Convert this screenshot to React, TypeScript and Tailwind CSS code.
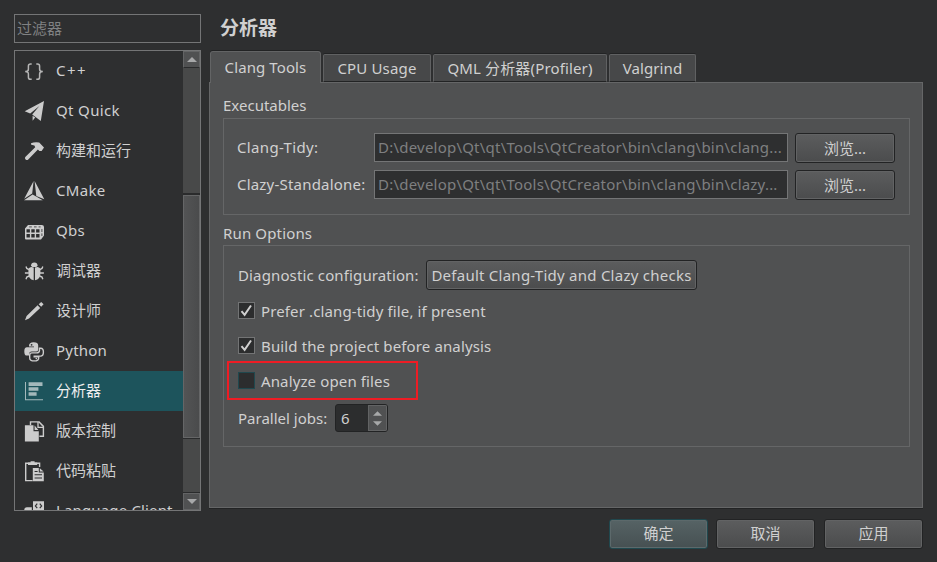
import type { ReactNode } from "react";

const Svg = ({ children }: { children: ReactNode }) => (
  <svg className="block shrink-0 overflow-visible" width="20" height="20" viewBox="0 0 20 20" fill="currentColor">
    {children}
  </svg>
);

const BracesIcon = () => (
  <Svg>
    <path
      d="M7.7 3H6.6Q4.4 3 4.4 5V8.2Q4.4 10.6 1.2 10.6Q4.4 10.6 4.4 13V16.2Q4.4 18.3 6.6 18.3H7.7M12.3 3H13.4Q15.6 3 15.6 5V8.2Q15.6 10.6 18.8 10.6Q15.6 10.6 15.6 13V16.2Q15.6 18.3 13.4 18.3H12.3"
      fill="none"
      stroke="currentColor"
      strokeWidth="1.5"
      opacity=".85"
    />
  </Svg>
);
const PlaneIcon = () => (
  <Svg>
    <path d="M20 0 .7 10.2l5.5 2.4L15.4 5 8.2 13.6l8.6 6.4zM8.6 14.8v5l2.6-3.2z" />
  </Svg>
);
const HammerIcon = () => (
  <Svg>
    <path d="M7 2.2Q10.5.6 15.2 1.4L20 6.5 17.6 10H15.4L13.9 8.4 4 18.8Q2.8 19.5 1.6 18.4T1.3 16L11.2 6.2 10.4 4.6 7.2 3.8z" />
  </Svg>
);
const CMakeIcon = () => (
  <Svg>
    <path d="M9.6 0 8.2 12.6.2 17.8zM10.6 0 20.3 18.2 12.3 14.9zM8.6 13.6 18.8 19.2H0z" />
  </Svg>
);
const QbsIcon = () => (
  <Svg>
    <path
      fillRule="evenodd"
      d="M4 4h13.8Q20 4 20 6v8.4L17 18.4H2Q1 18.4 1 17.4V7.4zM2.5 8.2v3.3h3.4V8.2zM7.3 8.2v3.3h3.4V8.2zM12.1 8.2v3.3h3.4V8.2zM2.5 13v3.6h3.4V13zM7.3 13v3.6h3.4V13zM12.1 13v3.6h3.4V13z"
    />
    <path d="M5.2 5.9h2.6M10 5.9h2.6M14.6 5.9h2M17.9 8v3M17.9 12.4v2.6" stroke="#2e2f30" strokeWidth=".8" />
  </Svg>
);
const BugIcon = () => (
  <Svg>
    <path d="M6.9 4.8Q7.2 1.4 10.3 1.4t3.4 3.4L12.3 6h-4zM9.7 6.4v12.8Q4.4 18 4.4 12.4V9.2Q4.4 6.6 7.2 6.1zM11 6.4v12.8Q16.4 18 16.4 12.4V9.2Q16.4 6.6 13.6 6.1z" />
    <path
      d="M5 8.6 2.8 7.5 2 5.5M4.8 12H.9M5.2 15l-2.4 1-.8 2.2M15.8 8.6 18 7.5l.8-2M16 12h3.9M15.6 15l2.4 1 .8 2.2"
      fill="none"
      stroke="currentColor"
      strokeWidth="1.4"
    />
  </Svg>
);
const PenIcon = () => (
  <Svg>
    <path d="m13.6 4.3 2.6 2.6L5 17.4 1 19.2l1.6-4.1zM17.2.9l2.4 2.3-2.4 2.5-2.5-2.5z" />
  </Svg>
);
const PythonIcon = () => (
  <Svg>
    <path
      transform="translate(0 .6)"
      d="M5 4.2Q5 .7 9.6.7T14.2 4v3.8Q14.2 10 12 10H7.7Q5.1 10 5.1 12.7V14H3Q.3 14 .3 9.8T3 5.6h7V5H5zM7.6 2.3a.9.9 0 1 0 0 1.8.9.9 0 0 0 0-1.8z"
      fillRule="evenodd"
    />
    <path
      transform="translate(0 .8)"
      d="M15.5 6.4h1.3q2.6 0 2.6 3.8T17 14.3h-6.8v.8h4.5v1q0 3-4.5 3t-4.5-3v-3q0-2 2.4-2h4.4q3 0 3-2.7z"
      fill="none"
      stroke="currentColor"
      strokeWidth="1.4"
    />
    <circle cx="12.3" cy="17.6" r=".8" />
  </Svg>
);
const AnalyzerIcon = () => (
  <Svg>
    <path d="M1 1h1v17.2H19v1H1zM4.6 1.3H18.5V5H4.6zM4.6 6.3h9.8V9.8H4.6zM4.6 11.2h8V14.8H4.6z" />
  </Svg>
);
const VersionIcon = () => (
  <Svg>
    <path d="M6.5 4V.9h8.6L19.4 5.4V15.2h-4" fill="none" stroke="currentColor" strokeWidth="1.4" />
    <path d="M14 1v5.4h5.4" fill="none" stroke="currentColor" strokeWidth="1.3" />
    <path d="M.9 4.2h8.6v6H14.8v10.2H.9zM10.6 4.6 14.4 9h-3.8z" />
  </Svg>
);
const PasteIcon = () => (
  <Svg>
    <path d="M8.6 19.6H1.7V2.2H15.6V6" fill="none" stroke="currentColor" strokeWidth="1.4" />
    <path d="M4 1.6h2.6V.2h4v1.4h2.6V4H4z" />
    <path
      fillRule="evenodd"
      d="M8.8 7h6v4.6h5v8.7H8.8zM15.8 7.2l3.8 3.4h-3.8zM10.6 10v1h3v-1zM10.6 13.2v1h7.4v-1zM10.6 16.4v1h7.4v-1z"
    />
  </Svg>
);
const ClientIcon = () => (
  <Svg>
    <path
      fillRule="evenodd"
      d="M9 .2h11V10H17l-3 3v-3H9zM12.8 2.2 10.6 4.9l2.2 2.7.9-.8-1.6-1.9 1.6-1.9zM16.2 2.2l-.9.8 1.6 1.9-1.6 1.9.9.8 2.2-2.7z"
    />
    <path d="M.3 14V8.8Q.3 6.2 3 6.2h4.8V14z" />
  </Svg>
);

const items: { label: string; icon: ReactNode; track?: string; active?: boolean }[] = [
  { label: "C++", icon: <BracesIcon />, track: "tracking-[1.5px]" },
  { label: "Qt Quick", icon: <PlaneIcon />, track: "tracking-[0.35px]" },
  { label: "构建和运行", icon: <HammerIcon /> },
  { label: "CMake", icon: <CMakeIcon />, track: "tracking-[0.3px]" },
  { label: "Qbs", icon: <QbsIcon />, track: "tracking-[0.3px]" },
  { label: "调试器", icon: <BugIcon /> },
  { label: "设计师", icon: <PenIcon /> },
  { label: "Python", icon: <PythonIcon />, track: "tracking-[0.2px]" },
  { label: "分析器", icon: <AnalyzerIcon />, active: true },
  { label: "版本控制", icon: <VersionIcon /> },
  { label: "代码粘贴", icon: <PasteIcon /> },
  { label: "Language Client", icon: <ClientIcon />, track: "tracking-[0.15px]" },
];

const Arrow = ({ down = false, small = false }: { down?: boolean; small?: boolean }) => (
  <svg width={small ? 9 : 10} height="5" viewBox="0 0 10 5" className="block" fill="#a7a8a9">
    <path d={down ? "M0 0h10L5 5z" : "M0 5h10L5 0z"} />
  </svg>
);

const Button = ({ children, className = "" }: { children: ReactNode; className?: string }) => (
  <button
    className={`flex shrink-0 items-center justify-center rounded-[3px] border border-[#222324] bg-linear-to-b from-[#5c5d5e] to-[#4b4c4d] whitespace-nowrap shadow-[inset_0_0_0_1px_#626364] ${className}`}
  >
    {children}
  </button>
);

const PathRow = ({ label, value, track }: { label: string; value: string; track: string }) => (
  <div className="flex h-[30px] items-start">
    <span className={`-ml-px w-[137px] shrink-0 leading-[29px] whitespace-nowrap ${track}`}>{label}</span>
    <div className="h-[29px] w-[414px] shrink-0 overflow-hidden border border-[#747576] bg-[#2e2f30] pl-[3px] leading-[27px] tracking-[0.22px] whitespace-nowrap text-[#7e7f80]">
      {value}
    </div>
    <Button className="ml-[7px] h-[30px] w-[100px]">浏览...</Button>
  </div>
);

const Check = ({ label, checked = false }: { label: string; checked?: boolean }) => (
  <div className="flex h-[35px] items-center gap-[6px]">
    <span
      className={`flex size-[17px] shrink-0 items-center justify-center border bg-[#2c2d2e] ${checked ? "border-[#737475]" : "border-[#20484e]"}`}
    >
      {checked && (
        <svg width="13" height="13" viewBox="0 0 13 13" fill="none">
          <path d="M1.5 7.2 4.6 10.8 11 1.5" stroke="#d0d0d0" strokeWidth="2" />
        </svg>
      )}
    </span>
    <span className="tracking-[0.13px] whitespace-nowrap">{label}</span>
  </div>
);

const tabs = [
  { label: "CPU Usage", width: "w-[108px]", track: "tracking-[0.15px]" },
  { label: "QML 分析器(Profiler)", width: "w-[174px]", track: "tracking-[0.15px]" },
  { label: "Valgrind", width: "w-[87px]", track: "tracking-[0.1px]" },
];

export default function App() {
  return (
    <div className="flex h-[562px] w-[937px] overflow-hidden bg-[#2e2f30] pt-[14px] pl-[14px] font-['Noto_Sans','Noto_Sans_CJK_SC',sans-serif] text-[15px] leading-[20px] text-[#d0d0d0]">
      <aside className="w-[187px] shrink-0">
        <div className="h-[29px] border border-[#747576] pl-[2px] leading-[27px] text-[#808182]">过滤器</div>
        <div className="mt-[7px] flex h-[461px] overflow-hidden border border-[#747576]">
          <ul className="w-[168px] shrink-0">
            {items.map((it) => (
              <li
                key={it.label}
                className={`flex h-[40px] items-center gap-[12px] pl-[9px] whitespace-nowrap ${it.active ? "bg-[#1d545c]" : ""}`}
              >
                <span className={it.active ? "text-[#a3b8bb]" : "text-[#cccccc]"}>{it.icon}</span>
                <span className={`pb-[2px] ${it.track ?? ""} ${it.active ? "text-[#efefef]" : ""}`}>{it.label}</span>
              </li>
            ))}
          </ul>
          <div className="flex w-[17px] flex-col bg-[#484949]">
            <div className="flex h-[17px] items-center justify-center border border-[#636465] border-b-[#2a2b2c] bg-[#505152]">
              <Arrow />
            </div>
            <div className="h-[127px] border-b-2 border-[#2a2b2c]" />
            <div className="h-[243px] border border-[#656667] bg-linear-to-r from-[#535455] to-[#4a4b4c]" />
            <div className="h-[55px] border-y border-[#2a2b2c]" />
            <div className="flex h-[17px] items-center justify-center border border-[#636465] bg-[#505152]">
              <Arrow down />
            </div>
          </div>
        </div>
      </aside>

      <main className="ml-[8px] w-[714px] shrink-0">
        <h1 className="h-[36px] pl-[11px] text-[19px] leading-[29px] font-bold">分析器</h1>
        <div className="flex h-[32px] items-end gap-[2px] pl-px">
          <div className="mb-[-1px] flex h-[32px] w-[111px] items-center justify-center rounded-t-[3px] border border-b-0 border-[#636465] bg-[#505152] pb-[2px] tracking-[0.1px] whitespace-nowrap shadow-[0_-1px_0_#222324]">
            Clang Tools
          </div>
          {tabs.map((t) => (
            <div
              key={t.label}
              className={`flex h-[28px] items-center justify-center rounded-t-[2px] border border-b-[#222324] border-[#606162] bg-[#474849] pb-px whitespace-nowrap shadow-[0_-1px_0_#222324] ${t.width} ${t.track}`}
            >
              {t.label}
            </div>
          ))}
        </div>
        <section className="h-[426px] border border-[#656667] bg-[#505152] pl-[13px] shadow-[0_1px_0_#222324]">
          <div className="pt-[11px] leading-[22px]">Executables</div>
          <div className="mt-[2px] flex h-[97px] w-[687px] flex-col gap-[7px] border border-[#656667] pt-[14px] pl-[14px]">
            <PathRow
              label="Clang-Tidy:"
              value="D:\develop\Qt\qt\Tools\QtCreator\bin\clang\bin\clang..."
              track="tracking-[0.35px]"
            />
            <PathRow
              label="Clazy-Standalone:"
              value="D:\develop\Qt\qt\Tools\QtCreator\bin\clang\bin\clazy..."
              track="tracking-[0.2px]"
            />
          </div>
          <div className="mt-[7px] leading-[22px] tracking-[0.15px]">Run Options</div>
          <div className="mt-px h-[202px] w-[687px] border border-[#656667] pt-[14px] pl-[14px]">
            <div className="flex h-[30px] items-center">
              <span className="w-[188px] shrink-0 tracking-[0.13px] whitespace-nowrap">Diagnostic configuration:</span>
              <Button className="h-[30px] w-[271px] tracking-[0.25px]">Default Clang-Tidy and Clazy checks</Button>
            </div>
            <div className="mt-[3px]">
              <Check label="Prefer .clang-tidy file, if present" checked />
              <Check label="Build the project before analysis" checked />
              <div className="-mt-[2px] -ml-[11px] flex h-[39px] w-[191px] items-center border-2 border-[#ee1c24] pl-[9px]">
                <Check label="Analyze open files" />
              </div>
            </div>
            <div className="mt-[4px] flex h-[28px] items-center">
              <span className="w-[97px] shrink-0 whitespace-nowrap">Parallel jobs:</span>
              <div className="flex h-[28px] w-[53px] overflow-hidden rounded-[3px] border border-[#222324] bg-[#2c2d2e]">
                <span className="w-[32px] pl-[5px] leading-[27px]">6</span>
                <div className="flex flex-1 flex-col items-center justify-center gap-[5px] border border-[#626364] bg-[#505152]">
                  <Arrow small />
                  <Arrow small down />
                </div>
              </div>
            </div>
          </div>
        </section>
        <footer className="mt-[11px] flex justify-end">
          <Button className="h-[30px] w-[99px] border-[#20484e]! from-[#566365]! to-[#465052]! pb-[2px] shadow-[inset_0_0_0_1px_#5c696b]!">
            确定
          </Button>
          <Button className="ml-[8px] h-[30px] w-[99px] pb-[2px]">取消</Button>
          <Button className="ml-[9px] h-[30px] w-[99px] pb-[2px]">应用</Button>
        </footer>
      </main>
    </div>
  );
}
